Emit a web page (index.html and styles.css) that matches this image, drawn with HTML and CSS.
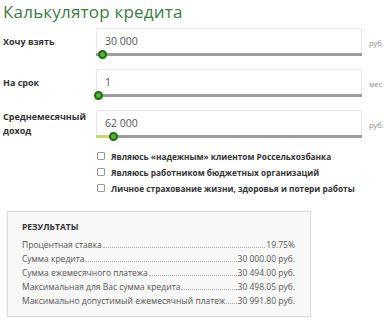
FILE: index.html
```html
<!DOCTYPE html>
<html lang="ru">
<head>
<meta charset="utf-8">
<link rel="stylesheet" href="styles.css">
</head>
<body>
<div class="calc">
  <h1 class="title">Калькулятор кредита</h1>
  <div class="rows">
    <div class="row">
      <div class="label">Хочу взять</div>
      <div class="field">
        <div class="box">30 000</div>
        <div class="track"><span class="thumb" style="left:2px"></span></div>
      </div>
      <div class="unit">руб.</div>
    </div>
    <div class="row">
      <div class="label">На срок</div>
      <div class="field">
        <div class="box">1</div>
        <div class="track"><span class="thumb" style="left:-2px"></span></div>
      </div>
      <div class="unit">мес</div>
    </div>
    <div class="row">
      <div class="label">Среднемесячный<br>доход</div>
      <div class="field">
        <div class="box">62 000</div>
        <div class="track"><span class="fill" style="width:13px"></span><span class="thumb" style="left:13px"></span></div>
      </div>
      <div class="unit">руб.</div>
    </div>
  </div>
  <ul class="checks">
    <li><span class="cb"></span>Являюсь «надежным» клиентом Россельхозбанка</li>
    <li><span class="cb"></span>Являюсь работником бюджетных организаций</li>
    <li><span class="cb"></span>Личное страхование жизни, здоровья и потери работы</li>
  </ul>
  <div class="results">
    <div class="res-title">РЕЗУЛЬТАТЫ</div>
    <div class="res-row"><span class="k">Процентная ставка</span><span class="dots"></span><span class="v">19.75%</span></div>
    <div class="res-row"><span class="k">Сумма кредита</span><span class="dots"></span><span class="v">30 000.00 руб.</span></div>
    <div class="res-row"><span class="k">Сумма ежемесячного платежа</span><span class="dots"></span><span class="v">30 494.00 руб.</span></div>
    <div class="res-row"><span class="k">Максимальная для Вас сумма кредита</span><span class="dots"></span><span class="v">30 498.05 руб.</span></div>
    <div class="res-row"><span class="k">Максимально допустимый ежемесячный платеж</span><span class="dots"></span><span class="v">30 991.80 руб.</span></div>
  </div>
</div>
</body>
</html>
```

FILE: styles.css
```css
* { box-sizing: border-box; }
html, body { margin: 0; padding: 0; background: #fff; }
body {
  font-family: "Open Sans", "Liberation Sans", sans-serif;
  color: #333;
  width: 387px;
  height: 320px;
  overflow: hidden;
}
.calc { padding: 0 0 0 3px; }
.title {
  margin: 0;
  padding-top: 1px;
  font-size: 17px;
  line-height: 22px;
  font-weight: 400;
  color: #3c7a44;
  letter-spacing: 0.2px;
}
.rows {
  display: flex;
  flex-direction: column;
  gap: 13px;
  margin-top: 5px;
}
.row {
  display: grid;
  grid-template-columns: 93px 266px auto;
  align-items: center;
}
.label {
  font-size: 9px;
  font-weight: 700;
  line-height: 14px;
  color: #333;
}
.field { display: flex; flex-direction: column; }
.box {
  height: 25px;
  border: 1px solid #e6e6e6;
  border-bottom: none;
  border-radius: 2px 2px 0 0;
  background: #fff;
  padding-left: 8px;
  font-size: 10.5px;
  line-height: 25px;
  color: #555;
}
.track {
  position: relative;
  height: 3px;
  background: #9d9d9d;
}
.fill {
  position: absolute;
  left: 0; top: 0; bottom: 0;
  background: #c9d86a;
}
.thumb {
  position: absolute;
  top: -3px;
  width: 9px;
  height: 9px;
  border-radius: 50%;
  background: #55b332;
  border: 2px solid #1f6a12;
}
.unit {
  padding-left: 7px;
  font-size: 7.5px;
  color: #8a8a8a;
  margin-top: 1px;
}
.checks {
  list-style: none;
  margin: 10px 0 0 94px;
  padding: 0;
}
.checks li {
  display: flex;
  align-items: center;
  gap: 6px;
  height: 16px;
  font-size: 8.3px;
  font-weight: 700;
  color: #333;
}
.cb {
  width: 8px;
  height: 8px;
  border: 1px solid #9a9a9a;
  border-radius: 1px;
  background: #fff;
  flex: none;
}
.results {
  margin: 15px 0 0 4px;
  width: 304px;
  height: 106px;
  border: 1px solid #dcdcdc;
  background: #f8f8f8;
  box-shadow: 0 0 2px rgba(0,0,0,0.06);
  padding: 8px 15px 0 14px;
}
.res-title {
  font-size: 8.5px;
  font-weight: 700;
  color: #333;
  line-height: 14px;
  margin-bottom: 4px;
}
.res-row {
  display: flex;
  align-items: baseline;
  font-size: 8.5px;
  line-height: 14px;
  color: #555;
}
.k, .v { white-space: nowrap; }
.dots {
  flex: 1;
  border-bottom: 1px dotted #aaa;
  margin: 0 1px;
  min-width: 4px;
}
```
